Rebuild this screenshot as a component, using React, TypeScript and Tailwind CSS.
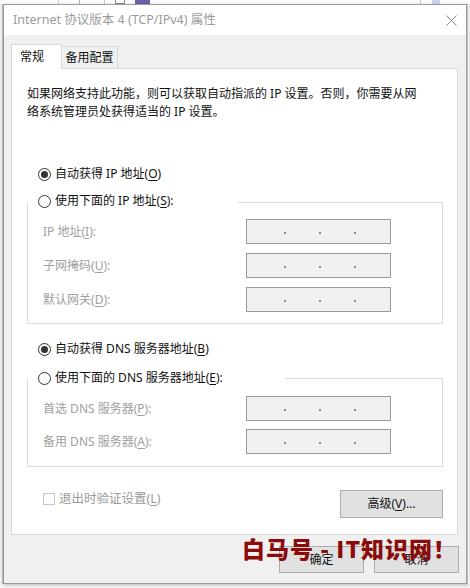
import React from "react";

const font = "font-['Noto_Sans','Noto_Sans_CJK_SC',sans-serif]";

function Key({ k }: { k: string }) {
  return <span className="underline underline-offset-2 decoration-1">{k}</span>;
}

function Radio({ checked }: { checked?: boolean }) {
  return (
    <span className="w-[13px] h-[13px] rounded-full border border-[#333] bg-white flex items-center justify-center shrink-0">
      {checked && <span className="w-[7px] h-[7px] rounded-full bg-[#333]" />}
    </span>
  );
}

function IpBox() {
  return (
    <div className="w-[145px] h-[25px] border border-[#9a9a9a] bg-[#f0f0f0] flex items-center pt-[3px]">
      <span className="w-[37px]" />
      <span className="w-[2px] h-[2px] bg-[#8a8a8a]" />
      <span className="w-[33px]" />
      <span className="w-[2px] h-[2px] bg-[#8a8a8a]" />
      <span className="w-[33px]" />
      <span className="w-[2px] h-[2px] bg-[#8a8a8a]" />
    </div>
  );
}

function IpRow({ label, k, tail }: { label: string; k: string; tail?: string }) {
  return (
    <div className="flex items-center h-[25px]">
      <div className="w-[203px] text-[#a0a0a0]">
        {label}(<Key k={k} />){tail ?? ":"}
      </div>
      <IpBox />
    </div>
  );
}

function Button({ children, w }: { children: React.ReactNode; w: string }) {
  return (
    <div className={`${w} h-full border border-[#adadad] bg-[#e1e1e1] flex items-center justify-center text-[#111]`}>
      {children}
    </div>
  );
}

export default function App() {
  return (
    <div className={`w-[470px] h-[588px] bg-[#f4f4f4] overflow-hidden relative flex flex-col text-[12px] ${font}`}>
      {/* window behind the dialog */}
      <div className="h-[4px] flex bg-[#fbfbfb]">
        <span className="w-[59px] border-r border-[#d0d0d0]" />
        <span className="w-[21px] border-r border-[#9fb4d8]" />
        <span className="w-[25px] border-r border-[#c8c8c8]" />
        <span className="w-[10px]" />
        <span className="w-[10px] border border-[#888] border-t-0" />
        <span className="w-[10px]" />
        <span className="w-[15px] bg-[#6b5fa8]" />
        <span className="w-[270px]" />
        <span className="w-[12px] border-l border-[#c8c8c8]" />
        <span className="w-[8px] bg-[#c9d3ea]" />
      </div>
      <div className="flex">
        <div className="w-[3px] flex flex-col bg-[#eeeeee] border-r border-[#bdbdbd]" />
        {/* dialog */}
        <div className="w-[464px] h-[580px] border border-[#9b9b9b] bg-[#f0f0f0] flex flex-col shadow-[1px_1px_3px_rgba(0,0,0,0.25)]">
          <div className="h-[30px] bg-white flex items-center justify-between pl-[9px] pr-[9px] shrink-0">
            <span className="text-[#9b9b9b] text-[12.5px]">Internet 协议版本 4 (TCP/IPv4) 属性</span>
            <svg width="11" height="11" viewBox="0 0 11 11">
              <path d="M0.5 0.5 L10.5 10.5 M10.5 0.5 L0.5 10.5" stroke="#8a8a8a" strokeWidth="1" />
            </svg>
          </div>

          <div className="pl-[7px] pr-[8px] pt-[9px] flex flex-col">
            <div className="h-[24px] flex items-start">
              <div className="relative z-10 w-[51px] h-[25px] bg-white border border-b-0 border-[#d9d9d9] pl-[8px] flex items-center text-[#111]">
                常规
              </div>
              <div className="mt-[2px] w-[56px] h-[22px] bg-[#f0f0f0] border border-b-0 border-l-0 border-[#d9d9d9] flex items-center justify-center text-[#111]">
                备用配置
              </div>
            </div>

            <div className="h-[467px] bg-white border border-[#d9d9d9] pl-[15px] pr-[14px] pt-[16px] flex flex-col text-[#111]">
              <p className="leading-[18px]">
                如果网络支持此功能，则可以获取自动指派的 IP 设置。否则，你需要从网
                <br />
                络系统管理员处获得适当的 IP 设置。
              </p>

              <div className="mt-[45px] ml-[11px] h-[16px] flex items-center gap-[4px]">
                <Radio checked />
                <span>
                  自动获得 IP 地址(<Key k="O" />)
                </span>
              </div>

              <div className="mt-[20px] border border-[#dcdcdc] flex flex-col pl-[15px] pb-[11px]">
                <div className="-mt-[10px] -ml-[15px] w-[210px] h-[16px] bg-white pl-[10px] flex items-center gap-[4px]">
                  <Radio />
                  <span>
                    使用下面的 IP 地址(<Key k="S" />):
                  </span>
                </div>
                <div className="mt-[10px] flex flex-col gap-[9px]">
                  <IpRow label="IP 地址" k="I" />
                  <IpRow label="子网掩码" k="U" />
                  <IpRow label="默认网关" k="D" />
                </div>
              </div>

              <div className="mt-[17px] ml-[11px] h-[16px] flex items-center gap-[4px]">
                <Radio checked />
                <span>
                  自动获得 DNS 服务器地址(<Key k="B" />)
                </span>
              </div>

              <div className="mt-[21px] border border-[#dcdcdc] flex flex-col pl-[15px] pb-[12px]">
                <div className="-mt-[9px] -ml-[15px] w-[257px] h-[16px] bg-white pl-[10px] flex items-center gap-[4px]">
                  <Radio />
                  <span>
                    使用下面的 DNS 服务器地址(<Key k="E" />):
                  </span>
                </div>
                <div className="mt-[10px] flex flex-col gap-[8px]">
                  <IpRow label="首选 DNS 服务器" k="P" />
                  <IpRow label="备用 DNS 服务器" k="A" />
                </div>
              </div>

              <div className="flex items-start justify-between">
                <div className="mt-[26px] ml-[16px] flex items-center gap-[4px] h-[12px]">
                  <span className="w-[12px] h-[12px] border border-[#c6c6c6] bg-white" />
                  <span className="text-[#9a9a9a] text-[12.5px]">
                    退出时验证设置(<Key k="L" />)
                  </span>
                </div>
                <div className="mt-[23px] h-[28px]">
                  <Button w="w-[103px]">
                    <span>
                      高级(<Key k="V" />)...
                    </span>
                  </Button>
                </div>
              </div>
            </div>
          </div>

          <div className="mt-[11px] h-[27px] pr-[7px] flex justify-end gap-[10px]">
            <Button w="w-[85px]">确定</Button>
            <Button w="w-[85px]">取消</Button>
          </div>
        </div>
        <div className="w-[3px] bg-[#eeeeee] border-l border-[#c4c4c4]" />
      </div>

      {/* watermark */}
      <div className="absolute left-[242px] top-[537px] text-[#8b0a0a] text-[23px] leading-none font-black font-['Noto_Sans_CJK_SC',sans-serif] whitespace-nowrap tracking-[1px]">
        白马号 - IT知识网！
      </div>
    </div>
  );
}
